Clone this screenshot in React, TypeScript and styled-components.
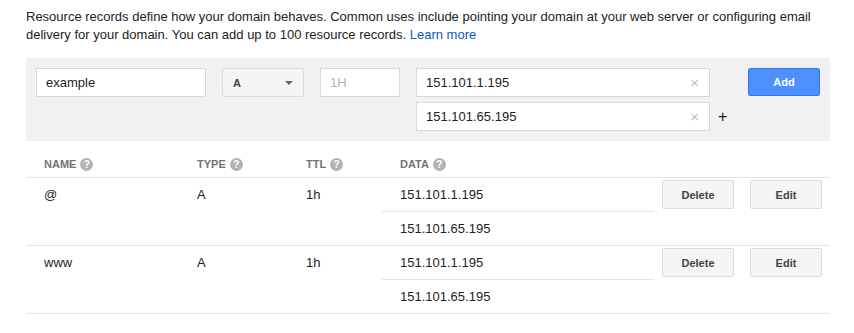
import styled, { createGlobalStyle } from 'styled-components';

const GlobalStyle = createGlobalStyle`
	body {
		margin: 0;
		background: #fff;
		font-family: 'Liberation Sans', Arial, sans-serif;
		color: #222;
	}
`;

const Page = styled.div`
	padding: 8px 24px 0 26px;
	width: 804px;
`;

const Intro = styled.p`
	margin: 0;
	font-size: 13px;
	line-height: 18px;
	color: #222;

	a {
		color: #15c;
		text-decoration: none;
	}
`;

const Panel = styled.div`
	margin-top: 14px;
	background: #f1f1f1;
	padding: 10px;
	display: flex;
	align-items: flex-start;
	gap: 16px;

	& > * {
		flex-shrink: 0;
	}
`;

const Field = styled.div<{ $width: number }>`
	box-sizing: border-box;
	flex-shrink: 0;
	width: ${(p) => p.$width}px;
	height: 29px;
	background: #fff;
	border: 1px solid #d9d9d9;
	display: flex;
	align-items: center;
	padding: 0 9px;
	font-size: 13px;
	color: #222;
`;

const Placeholder = styled.span`
	color: #b5b5b5;
`;

const FieldText = styled.span`
	flex: 1;
`;

const Clear = styled.span`
	color: #bdbdbd;
	font-size: 15px;
	line-height: 1;
	margin-right: 1px;
`;

const Select = styled.div`
	box-sizing: border-box;
	width: 82px;
	height: 29px;
	background: #f5f5f5;
	border: 1px solid #dcdcdc;
	border-radius: 2px;
	display: flex;
	align-items: center;
	justify-content: space-between;
	padding: 0 10px;
	font-size: 11px;
	font-weight: bold;
	color: #444;
`;

const Caret = styled.span`
	width: 0;
	height: 0;
	border-left: 4px solid transparent;
	border-right: 4px solid transparent;
	border-top: 4px solid #666;
`;

const DataFields = styled.div`
	display: flex;
	flex-direction: column;
	gap: 5px;
`;

const DataLine = styled.div`
	display: flex;
	align-items: center;
	gap: 8px;
`;

const Plus = styled.span`
	font-size: 16px;
	color: #222;
	line-height: 1;
`;

const Button = styled.button<{ $primary?: boolean }>`
	box-sizing: border-box;
	width: 72px;
	height: 29px;
	border-radius: 2px;
	font-family: 'Liberation Sans', Arial, sans-serif;
	font-size: 11px;
	font-weight: bold;
	cursor: pointer;
	background: ${(p) => (p.$primary ? '#4d90fe' : '#f5f5f5')};
	border: 1px solid ${(p) => (p.$primary ? '#3079ed' : '#dcdcdc')};
	color: ${(p) => (p.$primary ? '#fff' : '#444')};
`;

const AddButton = styled(Button)`
	margin-left: auto;
	height: 28px;
`;

const Table = styled.div`
	margin-top: 10px;
`;

const Row = styled.div`
	display: grid;
	grid-template-columns: 153px 109px 94px 272px 1fr;
	border-bottom: 1px solid #e5e5e5;
`;

const HeadCell = styled.div`
	height: 26px;
	display: flex;
	align-items: center;
	gap: 4px;
	padding-left: 18px;
	font-size: 11px;
	font-weight: bold;
	color: #737373;
`;

const Help = styled.span`
	width: 13px;
	height: 13px;
	border-radius: 50%;
	background: #b3b3b3;
	color: #fff;
	font-size: 10px;
	font-weight: bold;
	display: inline-flex;
	align-items: center;
	justify-content: center;
`;

const Cell = styled.div`
	padding-left: 18px;
	font-size: 13px;
	line-height: 33px;
	color: #222;
`;

const DataCell = styled.div`
	display: flex;
	flex-direction: column;
`;

const DataValue = styled.div`
	height: 33px;
	line-height: 33px;
	padding-left: 18px;
	font-size: 13px;
	color: #222;

	& + & {
		border-top: 1px solid #e5e5e5;
	}
`;

const Actions = styled.div`
	display: flex;
	gap: 16px;
	padding: 2px 0 0 8px;
`;

type DnsRecord = { name: string; type: string; ttl: string; data: string[] };

const records: DnsRecord[] = [
	{ name: '@', type: 'A', ttl: '1h', data: ['151.101.1.195', '151.101.65.195'] },
	{ name: 'www', type: 'A', ttl: '1h', data: ['151.101.1.195', '151.101.65.195'] },
];

const headers = ['NAME', 'TYPE', 'TTL', 'DATA'];

const App = () => {
	return (
		<>
			<GlobalStyle />
			<Page>
				<Intro>
					Resource records define how your domain behaves. Common uses include pointing your domain at your web server or
					configuring email delivery for your domain. You can add up to 100 resource records. <a href="#">Learn more</a>
				</Intro>

				<Panel>
					<Field $width={170}>example</Field>
					<Select>
						A
						<Caret />
					</Select>
					<Field $width={80}>
						<Placeholder>1H</Placeholder>
					</Field>
					<DataFields>
						<DataLine>
							<Field $width={294}>
								<FieldText>151.101.1.195</FieldText>
								<Clear>×</Clear>
							</Field>
						</DataLine>
						<DataLine>
							<Field $width={294}>
								<FieldText>151.101.65.195</FieldText>
								<Clear>×</Clear>
							</Field>
							<Plus>+</Plus>
						</DataLine>
					</DataFields>
					<AddButton $primary>Add</AddButton>
				</Panel>

				<Table>
					<Row>
						{headers.map((h) => (
							<HeadCell key={h}>
								{h}
								<Help>?</Help>
							</HeadCell>
						))}
						<div />
					</Row>
					{records.map((r) => (
						<Row key={r.name}>
							<Cell>{r.name}</Cell>
							<Cell>{r.type}</Cell>
							<Cell>{r.ttl}</Cell>
							<DataCell>
								{r.data.map((d) => (
									<DataValue key={d}>{d}</DataValue>
								))}
							</DataCell>
							<Actions>
								<Button>Delete</Button>
								<Button>Edit</Button>
							</Actions>
						</Row>
					))}
				</Table>
			</Page>
		</>
	);
};

export default App;
